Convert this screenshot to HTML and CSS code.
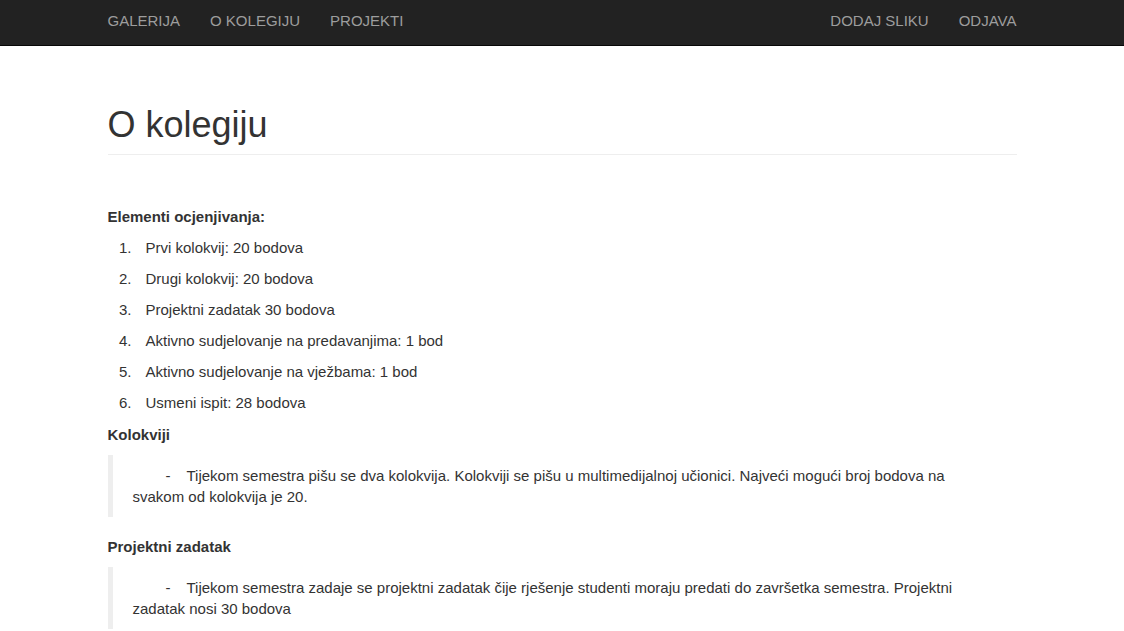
FILE: index.html
```html
<!DOCTYPE html>
<html lang="hr">
<head>
<meta charset="utf-8">
<title>O kolegiju</title>
<link rel="stylesheet" href="styles.css">
</head>
<body>
<nav class="navbar">
  <div class="container nav-inner">
    <ul class="nav">
      <li><a href="#">Galerija</a></li>
      <li><a href="#">O kolegiju</a></li>
      <li><a href="#">Projekti</a></li>
    </ul>
    <ul class="nav nav-right">
      <li><a href="#">Dodaj sliku</a></li>
      <li><a href="#">Odjava</a></li>
    </ul>
  </div>
</nav>
<main class="container">
  <div class="page-header"><h1>O kolegiju</h1></div>
  <p class="label">Elementi ocjenjivanja:</p>
  <ol class="list">
    <li>Prvi kolokvij: 20 bodova</li>
    <li>Drugi kolokvij: 20 bodova</li>
    <li>Projektni zadatak 30 bodova</li>
    <li>Aktivno sudjelovanje na predavanjima: 1 bod</li>
    <li>Aktivno sudjelovanje na vježbama: 1 bod</li>
    <li>Usmeni ispit: 28 bodova</li>
  </ol>
  <p class="label label-sec">Kolokviji</p>
  <blockquote class="quote">Tijekom semestra pišu se dva kolokvija. Kolokviji se pišu u multimedijalnoj učionici. Najveći mogući broj bodova na svakom od kolokvija je 20.</blockquote>
  <p class="label label-sec2">Projektni zadatak</p>
  <blockquote class="quote">Tijekom semestra zadaje se projektni zadatak čije rješenje studenti moraju predati do završetka semestra. Projektni zadatak nosi 30 bodova</blockquote>
</main>
</body>
</html>
```
FILE: styles.css
```css
html, body {
  margin: 0;
  padding: 0;
}
body {
  font-family: "Liberation Sans", Arial, Helvetica, sans-serif;
  font-size: 15px;
  line-height: 20px;
  color: #333;
  background: #fff;
}
.container {
  width: 909px;
  margin: 0 auto;
}
.navbar {
  background: #222;
  border-bottom: 1px solid #080808;
  height: 45px;
}
.nav-inner {
  display: flex;
  justify-content: space-between;
  height: 45px;
}
.nav {
  display: flex;
  list-style: none;
  margin: 0 -15px;
  padding: 0;
}
.nav a {
  display: block;
  padding: 0 15px;
  line-height: 42px;
  font-size: 15px;
  text-transform: uppercase;
  color: #9d9d9d;
  text-decoration: none;
}
.page-header {
  margin: 59px 0 52px;
  padding-bottom: 9px;
  border-bottom: 1px solid #eee;
}
.page-header h1 {
  margin: 0;
  font-size: 36px;
  font-weight: normal;
  line-height: 1.1;
}
.label {
  margin: 0;
  font-weight: bold;
}
.list {
  margin: 11px 0 0;
  padding: 0;
  list-style: none;
  counter-reset: item;
}
.list li {
  display: flex;
  counter-increment: item;
}
.list li::before {
  content: counter(item) ".";
  width: 24px;
  margin-right: 14px;
  text-align: right;
}
.list li + li {
  margin-top: 11px;
}
.label-sec {
  margin-top: 12px;
}
.quote {
  margin: 10px 0 20px;
  padding: 10px 20px;
  border-left: 5px solid #eee;
  line-height: 21px;
}
.quote::before {
  content: "-";
  margin-left: 33px;
  margin-right: 16px;
}
```
